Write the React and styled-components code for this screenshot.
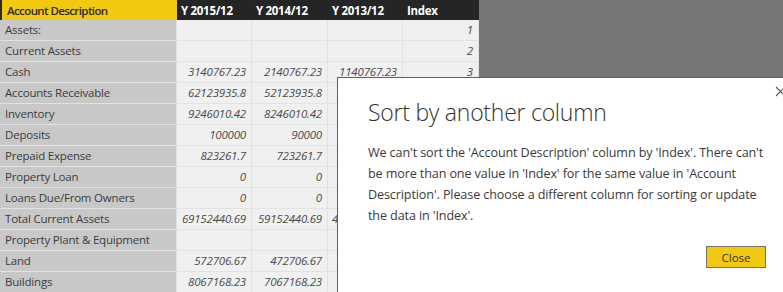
import React from "react";
import styled, { createGlobalStyle } from "styled-components";

const Global = createGlobalStyle`
  html, body { margin: 0; padding: 0; }
  body {
    background: #767676;
    overflow: hidden;
    font-family: "Open Sans", "Noto Sans", sans-serif;
  }
`;

const Page = styled.div`
  position: relative;
  width: 783px;
  height: 292px;
  overflow: hidden;
  display: flex;
  align-items: flex-start;
`;

const Table = styled.div`
  display: flex;
  flex-direction: column;
  width: 479px;
  background: #f0f0f0;
`;

const Row = styled.div`
  display: grid;
  grid-template-columns: 177px 75px 76px 75px 76px;
  height: ${(p) => (p.$head ? "20px" : "21px")};
  border-bottom: ${(p) => (p.$head ? "none" : "1px solid #e2e2e2")};
  box-sizing: border-box;
`;

const HeadCell = styled.div`
  display: flex;
  align-items: center;
  padding-left: ${(p) => (p.$first ? "5px" : "4px")};
  font-size: 11.5px;
  font-weight: ${(p) => (p.$first ? 600 : 700)};
  letter-spacing: ${(p) => (p.$first ? "-0.6px" : "-0.3px")};
  color: ${(p) => (p.$first ? "#2a2a2a" : "#ffffff")};
  background: ${(p) => (p.$first ? "#f2c811" : "#252525")};
  border-left: ${(p) => (p.$first ? "2px solid #2b2b2b" : "none")};
  white-space: nowrap;
`;

const Cell = styled.div`
  display: flex;
  align-items: center;
  justify-content: ${(p) => (p.$label ? "flex-start" : "flex-end")};
  padding: ${(p) => (p.$label ? "0 0 1px 5px" : "0 5px 1px 0")};
  background: ${(p) => (p.$label ? "#c8c8c8" : "#f0f0f0")};
  border-right: 1px solid #e2e2e2;
  font-size: 11.5px;
  letter-spacing: -0.2px;
  font-style: ${(p) => (p.$label ? "normal" : "italic")};
  color: ${(p) => (p.$label ? "#3c3c3c" : "#4a4a4a")};
  white-space: nowrap;
  overflow: hidden;
`;

const PeekCell = styled(Cell)`
  justify-content: flex-start;
  padding-left: 4px;
`;

const Dialog = styled.div`
  position: absolute;
  left: 337px;
  top: 77px;
  width: 452px;
  height: 240px;
  box-sizing: border-box;
  background: #ffffff;
  border: 1px solid #5f5f5f;
  padding: 16px 22px 0 30px;
  display: flex;
  flex-direction: column;
`;

const CloseX = styled.div`
  position: absolute;
  right: 2px;
  top: 7px;
  width: 12px;
  height: 12px;
  display: flex;
  align-items: center;
  justify-content: center;
`;

const Title = styled.h1`
  margin: 0;
  font-family: "Open Sans", "Noto Sans", sans-serif;
  font-weight: 300;
  font-size: 23px;
  line-height: 37px;
  color: #333333;
  letter-spacing: -0.25px;
`;

const Body = styled.div`
  margin-top: 11px;
  font-size: 12.6px;
  line-height: 21px;
  color: #3a3a3a;
  letter-spacing: -0.12px;
`;

const Line = styled.span`
  display: block;
  white-space: nowrap;
`;

const Actions = styled.div`
  display: flex;
  justify-content: flex-end;
  margin-top: 20px;
`;

const Button = styled.button`
  width: 60px;
  height: 22px;
  box-sizing: border-box;
  background: #f2c811;
  border: 1px solid #707070;
  font-family: "Open Sans", "Noto Sans", sans-serif;
  font-size: 11.5px;
  color: #333;
  padding: 0;
`;

// Cells hidden beneath the dialog are left empty; only the leading "4" of
// the Total Current Assets figure peeks out beside the dialog's edge.
const rows = [
  ["Assets:", "", "", "", "1"],
  ["Current Assets", "", "", "", "2"],
  ["Cash", "3140767.23", "2140767.23", "1140767.23", "3"],
  ["Accounts Receivable", "62123935.8", "52123935.8", "", ""],
  ["Inventory", "9246010.42", "8246010.42", "", ""],
  ["Deposits", "100000", "90000", "", ""],
  ["Prepaid Expense", "823261.7", "723261.7", "", ""],
  ["Property Loan", "0", "0", "", ""],
  ["Loans Due/From Owners", "0", "0", "", ""],
  ["Total Current Assets", "69152440.69", "59152440.69", "4", ""],
  ["Property Plant & Equipment", "", "", "", ""],
  ["Land", "572706.67", "472706.67", "", ""],
  ["Buildings", "8067168.23", "7067168.23", "", ""],
];

const heads = ["Account Description", "Y 2015/12", "Y 2014/12", "Y 2013/12", "Index"];

export default function App() {
  return (
    <Page>
      <Global />
      <Table>
        <Row $head>
          {heads.map((h, i) => (
            <HeadCell key={h} $first={i === 0}>
              {h}
            </HeadCell>
          ))}
        </Row>
        {rows.map((r) => (
          <Row key={r[0]}>
            {r.map((v, i) =>
              r[0] === "Total Current Assets" && i === 3 ? (
                <PeekCell key={i}>{v}</PeekCell>
              ) : (
                <Cell key={i} $label={i === 0}>
                  {v}
                </Cell>
              )
            )}
          </Row>
        ))}
      </Table>
      <Dialog>
        <CloseX>
          <svg width="11" height="11" viewBox="0 0 11 11">
            <path d="M1 1L10 10M10 1L1 10" stroke="#555" strokeWidth="1.1" />
          </svg>
        </CloseX>
        <Title>Sort by another column</Title>
        <Body>
          <Line>We can't sort the 'Account Description' column by 'Index'. There can't</Line>
          <Line>be more than one value in 'Index' for the same value in 'Account</Line>
          <Line>Description'. Please choose a different column for sorting or update</Line>
          <Line>the data in 'Index'.</Line>
        </Body>
        <Actions>
          <Button>Close</Button>
        </Actions>
      </Dialog>
    </Page>
  );
}
